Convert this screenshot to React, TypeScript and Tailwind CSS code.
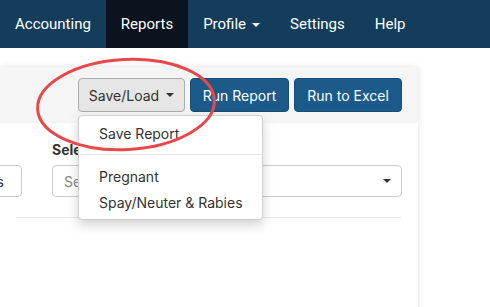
import React from "react";

const navItems = [
  { label: "Accounting" },
  { label: "Reports", active: true },
  { label: "Profile", caret: true },
  { label: "Settings" },
  { label: "Help" },
];

const Caret = ({ className }: { className: string }) => (
  <span className={`inline-block w-0 h-0 border-x-[4px] border-x-transparent border-t-[4px] ${className}`} />
);

export default function App() {
  return (
    <div
      className="relative w-[490px] h-[307px] overflow-hidden bg-white"
      style={{ fontFamily: "Inter, 'Liberation Sans', sans-serif" }}
    >
      <nav className="h-12 bg-[#133d5b] flex" style={{ fontFamily: "Roboto, sans-serif" }}>
        {navItems.map((item) => (
          <div
            key={item.label}
            className={`px-[15px] pt-[1px] flex items-center gap-[6px] text-[15px] text-white ${item.active ? "bg-[#0b141e]" : ""}`}
          >
            {item.label}
            {item.caret && <Caret className="border-t-white mt-[1px]" />}
          </div>
        ))}
      </nav>

      <div className="pt-[19px]">
        <div className="w-[418px] bg-white shadow-[0_0_7px_rgba(0,0,0,0.12)]">
          {/* header with actions */}
          <div className="h-[56px] bg-[#f5f5f5] flex items-center justify-end gap-[5px] pr-[16px]">
            <div className="relative">
              <button className="h-[34px] w-[107px] rounded-[4px] border border-[#adadad] bg-[#e6e6e6] text-[14px] text-[#333] flex items-center justify-center gap-[7px]">
                Save/Load
                <Caret className="border-t-[#333]" />
              </button>
              <div className="absolute left-0 top-full mt-[3px] w-[185px] z-10 bg-white border border-[#d0d0d0] rounded-[4px] shadow-[0_5px_12px_rgba(0,0,0,0.18)] py-[4px] text-[14px] text-[#333]">
                <div className="h-[26px] flex items-center pl-[20px]">Save Report</div>
                <div className="my-[8px] h-px bg-[#e5e5e5]" />
                <div className="h-[26px] flex items-center pl-[20px]">Pregnant</div>
                <div className="h-[26px] flex items-center pl-[20px]">Spay/Neuter &amp; Rabies</div>
              </div>
            </div>
            <button className="h-[34px] w-[99px] rounded-[4px] border border-[#164e78] bg-[#1b5a89] text-[14px] text-white">
              Run Report
            </button>
            <button className="h-[34px] w-[108px] rounded-[4px] border border-[#164e78] bg-[#1b5a89] text-[14px] text-white">
              Run to Excel
            </button>
          </div>

          {/* filters */}
          <div className="px-4 pt-[17px]">
            <div className="flex items-end gap-[30px]">
              <button className="ml-[-84px] h-[32px] w-[90px] shrink-0 rounded-[4px] border border-[#ccc] bg-white text-[14px] text-[#333] text-right pr-[17px] whitespace-nowrap overflow-hidden">
                Columns
              </button>
              <div className="flex-1">
                <div className="text-[14px] font-bold text-[#333] leading-[20px] mb-[5px]">Select Report</div>
                <div className="h-[32px] rounded-[4px] border border-[#ccc] flex items-center justify-between pl-[11px] pr-[10px] text-[14px] text-[#888]">
                  Select...
                  <Caret className="border-t-[#333]" />
                </div>
              </div>
            </div>
            <div className="mt-[20px] h-px bg-[#e8e8e8]" />
            <div className="h-[100px]" />
          </div>
        </div>
      </div>

      <svg className="absolute inset-0 pointer-events-none z-20" width="490" height="307">
        <ellipse
          cx="126"
          cy="104.5"
          rx="88.5"
          ry="45"
          transform="rotate(-3 126 104.5)"
          fill="none"
          stroke="#e8484a"
          strokeWidth="3"
        />
      </svg>
    </div>
  );
}
